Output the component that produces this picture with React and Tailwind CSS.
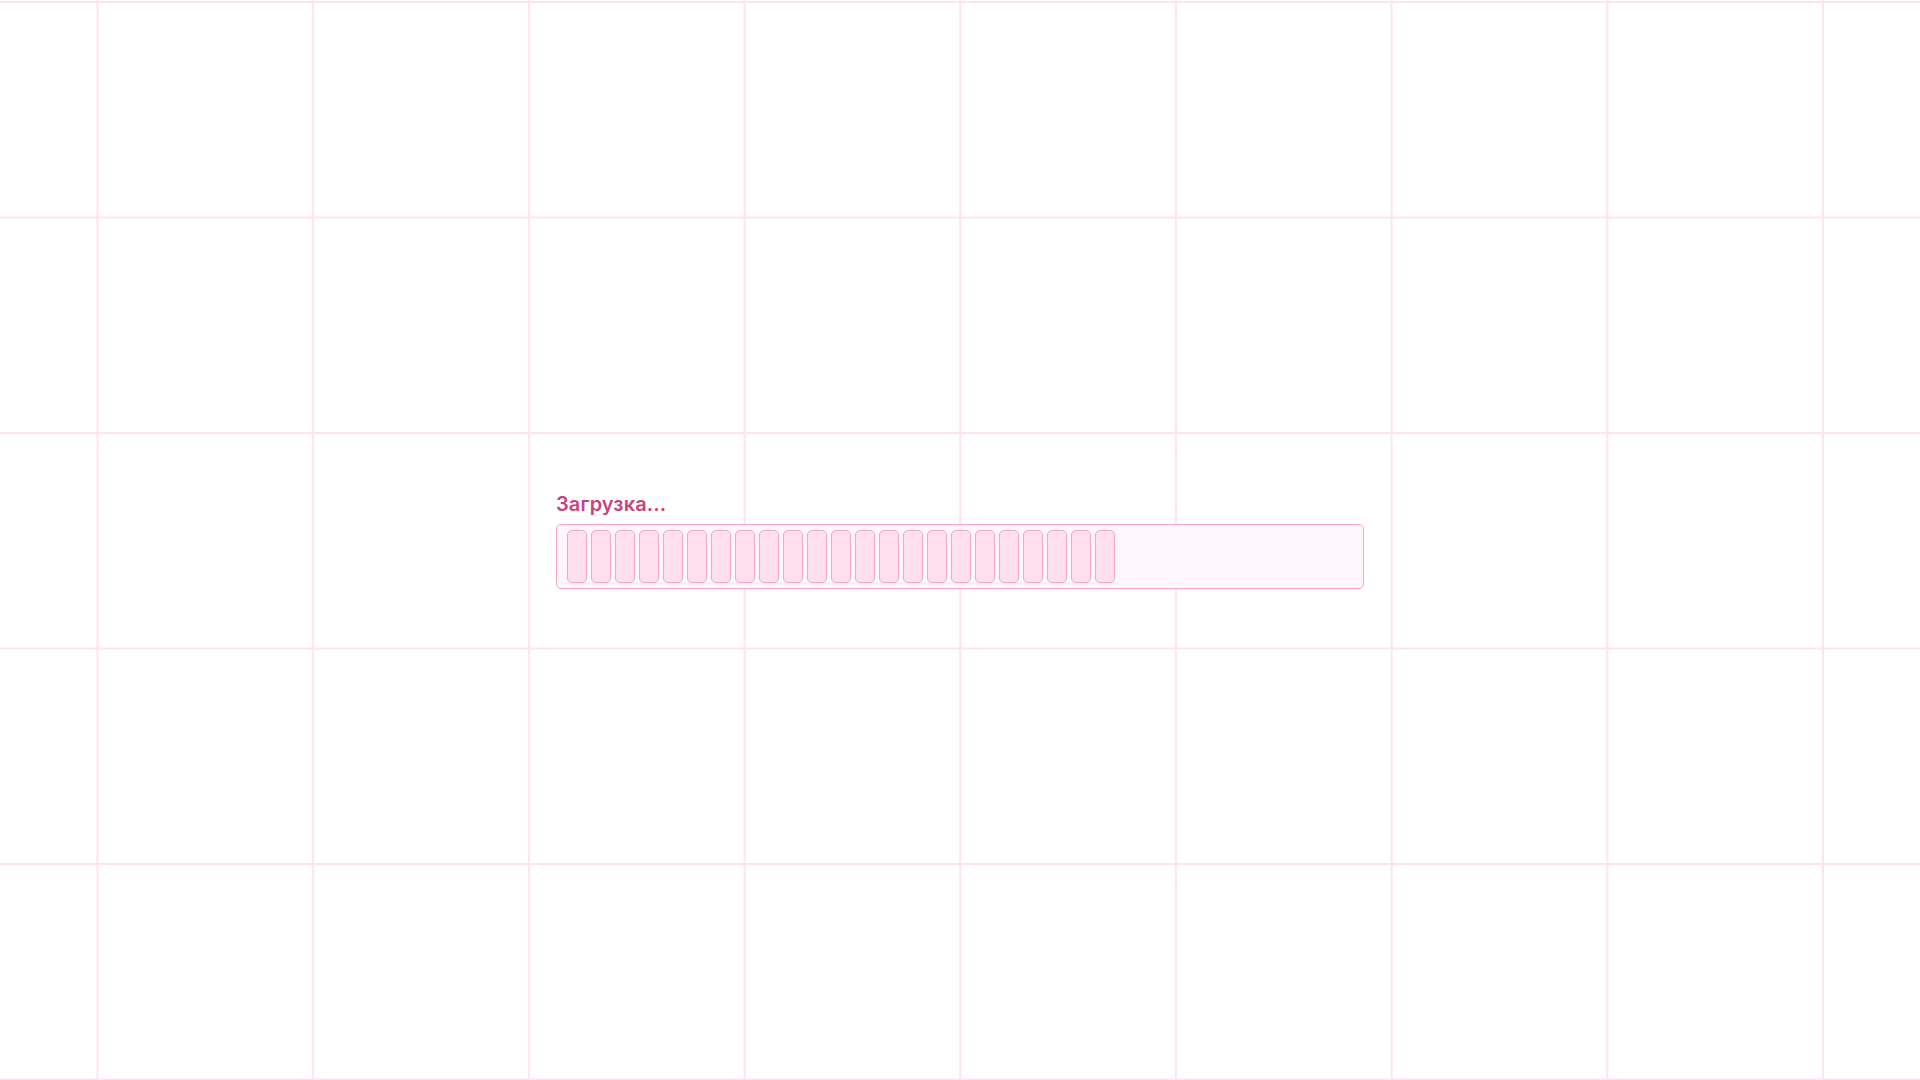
import React from 'react';

const SEGMENTS = 23;

export default function App() {
  return (
    <div
      className="flex h-screen w-full items-center justify-center bg-white bg-[linear-gradient(to_right,#fde4f0_1.5px,transparent_1.5px),linear-gradient(to_bottom,#fde4f0_1.5px,transparent_1.5px)] bg-[size:215.7px_215.5px] bg-[position:96.5px_1px]"
      style={{ fontFamily: 'Inter, "Noto Sans", sans-serif' }}
    >
      <div className="flex w-[808px] -translate-y-[1px] flex-col">
        <div className="mb-[6px] text-[20px] font-semibold leading-[28px] tracking-[0.1px] text-[#c4457b]">Загрузка...</div>
        <div className="flex h-[65px] items-center gap-[4px] rounded-[5px] border border-[#f5a3c7] bg-[#fff5fc] px-[10px]">
          {Array.from({ length: SEGMENTS }).map((_, i) => (
            <div
              key={i}
              className="h-[53px] w-[20px] rounded-[5px] border border-[#f5a3c7] bg-[#ffdfeb]"
            />
          ))}
        </div>
      </div>
    </div>
  );
}
